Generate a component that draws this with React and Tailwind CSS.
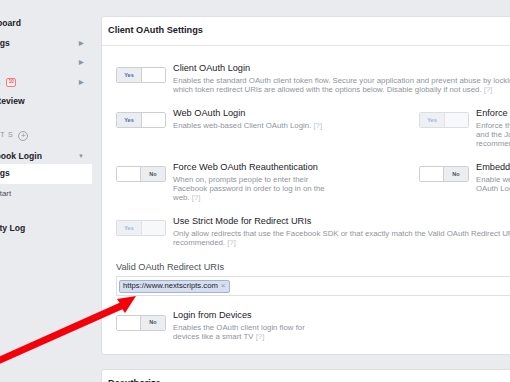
import React from "react";

const Toggle = ({ on = true, disabled = false }) => (
  <div
    className={`mt-[4.5px] flex h-[16px] w-[50px] shrink-0 rounded-[2px] border ${
      disabled ? "border-[#dadde1]" : "border-[#ccd0d5]"
    } overflow-hidden`}
  >
    {on ? (
      <>
        <div
          className={`flex w-[25px] items-center justify-center border-r text-[5.5px] font-bold ${
            disabled
              ? "border-[#e1e3e7] bg-[#eef0f3] text-[#9cb4d8]"
              : "border-[#ccd0d5] bg-[#ebedf0] text-[#4267b2]"
          }`}
        >
          Yes
        </div>
        <div className={`flex-1 ${disabled ? "bg-[#f7f8fa]" : "bg-white"}`} />
      </>
    ) : (
      <>
        <div className="flex-1 bg-white" />
        <div className="flex w-[25px] items-center justify-center border-l border-[#ccd0d5] bg-[#ebedf0] text-[5.5px] font-bold text-[#4b4f56]">
          No
        </div>
      </>
    )}
  </div>
);

const Q = () => <span className="text-[#bec2c9]">[?]</span>;

const Setting = ({ title, lines, on, disabled, className = "" }) => (
  <div className={`flex items-start ${className}`}>
    <Toggle on={on} disabled={disabled} />
    <div className="ml-[7px] whitespace-nowrap">
      <div className="text-[9.2px] leading-[11px] text-[#1d2129]">{title}</div>
      <div className="mt-[2px] text-[7.8px] leading-[9px] text-[#90949c]">
        {lines.map((l, i) => (
          <div key={i}>{l}</div>
        ))}
      </div>
    </div>
  </div>
);

const NavItem = ({ label, arrow, children }) => (
  <div className="flex h-[19.5px] items-center pr-[8px] text-[8.6px] font-bold text-[#1d2129]">
    <span className="shrink-0">{label}</span>
    {children}
    <span className="flex-1" />
    {arrow && <span className="text-[6px] text-[#90949c]">▶</span>}
  </div>
);

const Card = ({ title, children, className = "" }) => (
  <div className={`w-[560px] rounded-[3px] border border-[#dddfe2] bg-white ${className}`}>
    <div className="flex h-[29px] items-center border-b border-[#e5e5e5] pl-[6px] text-[9.2px] font-bold text-[#1d2129]">
      {title}
    </div>
    {children}
  </div>
);

export default function App() {
  return (
    <div
      className="relative flex h-[382px] w-[510px] overflow-hidden bg-[#e9ebee]"
      style={{ fontFamily: '"Liberation Sans", Arial, sans-serif' }}
    >
      {/* sidebar */}
      <div className="w-[92px] shrink-0 overflow-hidden">
        <div className="-ml-[24px] w-[116px] pt-[14px]">
          <NavItem label="Dashboard" />
          <NavItem label="Settings" arrow />
          <NavItem label="Roles" arrow />
          <NavItem label="Alerts" arrow>
            <span className="ml-[6px] flex h-[9px] w-[10px] shrink-0 items-center justify-center rounded-[2px] border border-[#f7797b] bg-[#fff5f5] text-[4.5px] font-bold text-[#fa3e3e]">
              10
            </span>
          </NavItem>
          <NavItem label="App Review" />
          <div className="mt-[14px] flex h-[20px] items-center text-[7px] tracking-[3.5px] text-[#90949c]">
            <span className="-ml-[27px] shrink-0">PRODUCTS</span>
            <span className="ml-[2px] flex h-[10px] w-[10px] shrink-0 items-center justify-center rounded-full border border-[#a0a4ab] text-[8px] leading-none tracking-normal text-[#90949c]">
              +
            </span>
          </div>
          <div className="flex h-[18px] items-center pr-[8px] pt-[3px] text-[8.6px] font-bold text-[#1d2129]">
            <span>Facebook Login</span>
            <span className="flex-1" />
            <span className="text-[6px] text-[#90949c]">▼</span>
          </div>
          <div className="flex h-[20px] items-center bg-white text-[8.6px] font-bold text-[#1d2129]">
            Settings
          </div>
          <div className="flex h-[20px] items-center text-[7.8px] text-[#4b4f56]">Quickstart</div>
          <div className="mt-[15px] flex h-[20px] items-center text-[8.6px] font-bold text-[#1d2129]">
            Activity Log
          </div>
        </div>
      </div>

      {/* main */}
      <div className="ml-[9px] pt-[16px]">
        <Card title="Client OAuth Settings">
          <div className="flex flex-col gap-[14px] pb-[13px] pl-[14px] pt-[16.5px]">
            <Setting
              title="Client OAuth Login"
              on
              lines={[
                "Enables the standard OAuth client token flow. Secure your application and prevent abuse by locking down",
                <>
                  which token redirect URIs are allowed with the options below. Disable globally if not used.{" "}
                  <Q />
                </>,
              ]}
            />
            <div className="flex">
              <Setting
                className="w-[303px]"
                title="Web OAuth Login"
                on
                lines={[
                  <>
                    Enables web-based Client OAuth Login. <Q />
                  </>,
                ]}
              />
              <Setting
                title="Enforce HTTPS"
                on
                disabled
                lines={[
                  "Enforce the use of HTTPS for Redirect URIs",
                  "and the JavaScript SDK. Strongly",
                  "recommended. [?]",
                ]}
              />
            </div>
            <div className="flex">
              <Setting
                className="w-[303px]"
                title="Force Web OAuth Reauthentication"
                on={false}
                lines={[
                  "When on, prompts people to enter their",
                  "Facebook password in order to log in on the",
                  <>
                    web. <Q />
                  </>,
                ]}
              />
              <Setting
                title="Embedded Browser OAuth Login"
                on={false}
                lines={["Enable webview Redirect URIs for Client", "OAuth Login. [?]"]}
              />
            </div>
            <Setting
              title="Use Strict Mode for Redirect URIs"
              on
              disabled
              lines={[
                "Only allow redirects that use the Facebook SDK or that exactly match the Valid OAuth Redirect URIs. Strongly",
                <>
                  recommended. <Q />
                </>,
              ]}
            />
            <div>
              <div className="text-[9.2px] leading-[12px] text-[#4b4f56]">Valid OAuth Redirect URIs</div>
              <div className="mt-[3.5px] flex h-[20px] items-center border border-[#dddfe2] pl-[2px]">
                <div className="flex h-[13px] items-center rounded-[2px] border border-[#9cb4d8] bg-[#d6dfef] px-[3px] text-[7.7px] text-[#1d2129]">
                  https://www.nextscripts.com
                  <span className="ml-[3px] text-[8px] text-[#90949c]">×</span>
                </div>
              </div>
            </div>
            <Setting
              title="Login from Devices"
              on={false}
              lines={[
                "Enables the OAuth client login flow for",
                <>
                  devices like a smart TV <Q />
                </>,
              ]}
            />
          </div>
        </Card>
        <Card title="Deauthorize" className="mt-[14px]" />
      </div>

      {/* annotation arrow */}
      <svg className="pointer-events-none absolute left-0 top-0" width="510" height="382" viewBox="0 0 510 382">
        <polygon
          points="136,296 117,299 119.6,302.8 -21.4,365.7 -18.6,372.1 122.4,309.2 125,313"
          fill="#f5000a"
        />
      </svg>
    </div>
  );
}
